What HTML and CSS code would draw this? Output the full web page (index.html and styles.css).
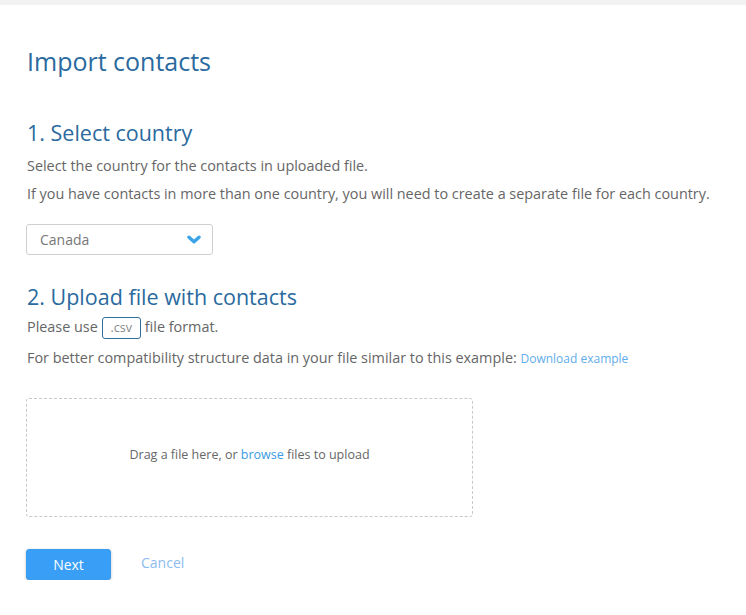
FILE: index.html
```html
<!DOCTYPE html>
<html lang="en">
<head>
<meta charset="utf-8">
<title>Import contacts</title>
<link rel="stylesheet" href="styles.css">
</head>
<body>
<div class="topbar"></div>
<main class="page">
  <h1 class="title">Import contacts</h1>

  <section class="step step-country">
    <h2 class="step-title">1. Select country</h2>
    <p class="text">Select the country for the contacts in uploaded file.</p>
    <p class="text">If you have contacts in more than one country, you will need to create a separate file for each country.</p>
    <div class="select">
      <span class="select-value">Canada</span>
      <svg class="chevron" width="14" height="10" viewBox="0 0 14 10" aria-hidden="true">
        <path d="M2 2.2 L7 6.8 L12 2.2" fill="none" stroke="#3ba3e8" stroke-width="3.4" stroke-linecap="round" stroke-linejoin="round"/>
      </svg>
    </div>
  </section>

  <section class="step step-upload">
    <h2 class="step-title">2. Upload file with contacts</h2>
    <p class="text text-tight">Please use <span class="badge">.csv</span> file format.</p>
    <p class="text text-example">For better compatibility structure data in your file similar to this example: <a class="link-small" href="#">Download example</a></p>
    <div class="dropzone">
      <span class="dropzone-text">Drag a file here, or <a class="link" href="#">browse</a> files to upload</span>
    </div>
  </section>

  <div class="actions">
    <button class="btn-primary" type="button">Next</button>
    <a class="btn-link" href="#">Cancel</a>
  </div>
</main>
</body>
</html>
```

FILE: styles.css
```css
* { box-sizing: border-box; }
html, body { margin: 0; padding: 0; background: #fff; }
body {
  font-family: "Open Sans", "Noto Sans", sans-serif;
  color: #666;
  font-size: 14.4px;
}
.topbar { height: 5px; background: #f2f2f2; }
.page { padding: 0 26px; }
.title {
  margin: 41px 0 0 1px;
  font-size: 25px;
  line-height: 30px;
  font-weight: 400;
  color: #2a6a9e;
}
.step-title {
  margin: 0 0 0 1px;
  font-size: 21.5px;
  line-height: 28px;
  font-weight: 400;
  color: #2a6a9e;
}
.step-country { margin-top: 43px; }
.text {
  margin: 0 0 0 1px;
  line-height: 28px;
  color: #666;
}
.step-country .step-title { margin-bottom: 5px; }
.select {
  margin-top: 16px;
  width: 187px;
  height: 31px;
  border: 1px solid #cfcfcf;
  border-radius: 3px;
  display: flex;
  align-items: center;
  justify-content: space-between;
  padding: 0 11px 0 13px;
}
.select-value { color: #777; font-size: 14px; }
.chevron { display: block; }
.step-upload { margin-top: 28px; }
.step-upload .step-title { margin-bottom: 0; }
.text-tight { line-height: 32px; }
.text-example { margin-top: 1px; }
.badge {
  display: inline-block;
  border: 1px solid #2f6d9c;
  border-radius: 3px;
  padding: 0 8px;
  line-height: 20px;
  font-size: 12.5px;
  color: #888;
}
.link-small { color: #5fadea; font-size: 12px; text-decoration: none; }
.link { color: #3a9be2; text-decoration: none; }
.dropzone {
  margin-top: 25px;
  width: 447px;
  height: 119px;
  border: 1px dashed #c9c9c9;
  border-radius: 3px;
  display: flex;
  align-items: center;
  justify-content: center;
  padding-bottom: 6px;
}
.dropzone-text { font-size: 12.5px; color: #666; }
.actions {
  margin-top: 32px;
  display: flex;
  align-items: center;
  gap: 30px;
}
.btn-primary {
  width: 85px;
  height: 31px;
  border: 1px solid #3a9cee;
  border-radius: 3px;
  background: #389ef6;
  color: #fff;
  font-family: inherit;
  font-size: 14px;
  box-shadow: 0 1px 3px rgba(0,0,0,0.25);
  cursor: pointer;
  padding: 0;
}
.btn-link {
  color: #8cbcf0;
  font-size: 14px;
  text-decoration: none;
  position: relative;
  top: -2px;
}
```
